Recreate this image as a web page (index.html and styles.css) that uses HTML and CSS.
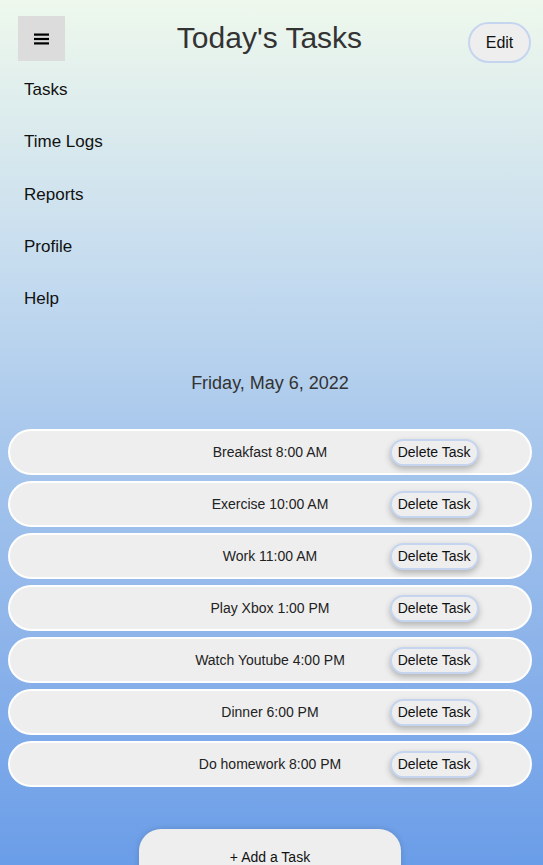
FILE: index.html
```html
<!DOCTYPE html>
<html>
<head>
<meta charset="utf-8">
<link rel="stylesheet" href="styles.css">
</head>
<body>
<div class="app">
  <header class="topbar">
    <button class="menu-btn" aria-label="Menu">
      <svg width="15" height="12" viewBox="0 0 15 12"><rect x="0" y="0.5" width="15" height="2.2" fill="#000"/><rect x="0" y="4.9" width="15" height="2.2" fill="#000"/><rect x="0" y="9.3" width="15" height="2.2" fill="#000"/></svg>
    </button>
    <h1 class="title">Today's Tasks</h1>
    <button class="edit-btn">Edit</button>
  </header>
  <nav class="nav">
    <a class="nav-item">Tasks</a>
    <a class="nav-item">Time Logs</a>
    <a class="nav-item">Reports</a>
    <a class="nav-item">Profile</a>
    <a class="nav-item">Help</a>
  </nav>
  <div class="date">Friday, May 6, 2022</div>
  <ul class="tasks">
    <li class="task"><span class="task-name">Breakfast 8:00 AM</span><button class="del-btn">Delete Task</button></li>
    <li class="task"><span class="task-name">Exercise 10:00 AM</span><button class="del-btn">Delete Task</button></li>
    <li class="task"><span class="task-name">Work 11:00 AM</span><button class="del-btn">Delete Task</button></li>
    <li class="task"><span class="task-name">Play Xbox 1:00 PM</span><button class="del-btn">Delete Task</button></li>
    <li class="task"><span class="task-name">Watch Youtube 4:00 PM</span><button class="del-btn">Delete Task</button></li>
    <li class="task"><span class="task-name">Dinner 6:00 PM</span><button class="del-btn">Delete Task</button></li>
    <li class="task"><span class="task-name">Do homework 8:00 PM</span><button class="del-btn">Delete Task</button></li>
  </ul>
  <div class="add-wrap">
    <button class="add-btn">+ Add a Task</button>
  </div>
</div>
</body>
</html>
```
FILE: styles.css
```css
html, body {
  margin: 0;
  padding: 0;
  height: 100%;
}
body {
  font-family: "Liberation Sans", Arial, sans-serif;
  background: linear-gradient(to bottom, #eef8ec 0%, #c4dbef 32%, #a9c8ec 50%, #8cb3ea 75%, #6a9de8 100%);
  color: #222;
  overflow: hidden;
}
.app {
  width: 524px;
  margin-left: 8px;
  height: 865px;
  display: flex;
  flex-direction: column;
}
.topbar {
  height: 70px;
  display: flex;
  align-items: flex-start;
}
.menu-btn {
  margin-top: 16px;
  margin-left: 10px;
  width: 47px;
  height: 45px;
  border: none;
  background: #dcdcdc;
  display: flex;
  align-items: center;
  justify-content: center;
  padding: 0;
}
.title {
  flex: 1;
  margin: 0;
  margin-top: 21px;
  text-align: center;
  font-size: 30px;
  font-weight: normal;
  color: #333;
  line-height: 34px;
  padding-left: 6px;
}
.edit-btn {
  margin-top: 22px;
  width: 63px;
  height: 41px;
  border-radius: 21px;
  border: 2px solid #c5d5f0;
  background: #eeeeee;
  font-family: "Liberation Sans", Arial, sans-serif;
  font-size: 16px;
  color: #111;
  margin-right: 1px;
}
.nav {
  display: flex;
  flex-direction: column;
  margin-top: 17px;
  padding-left: 16px;
}
.nav-item {
  font-size: 17px;
  color: #111;
  line-height: 20px;
  height: 52.3px;
}
.date {
  margin-top: 32px;
  text-align: center;
  font-size: 18px;
  color: #333;
  line-height: 20px;
}
.tasks {
  list-style: none;
  margin: 36px 0 0 0;
  padding: 0;
  display: flex;
  flex-direction: column;
  gap: 6px;
}
.task {
  box-sizing: border-box;
  height: 46px;
  border: 2px solid #fff;
  border-radius: 23px;
  background: #eeeeee;
  display: grid;
  grid-template-columns: 1fr 1fr 1fr;
  align-items: center;
}
.task-name {
  grid-column: 2;
  text-align: center;
  font-size: 14px;
  color: #222;
  white-space: nowrap;
}
.del-btn {
  grid-column: 3;
  justify-self: start;
  margin-left: 33px;
  height: 27px;
  padding: 0 6px;
  border-radius: 14px;
  border: 2px solid #c5d5f0;
  background: #eeeeee;
  font-family: "Liberation Sans", Arial, sans-serif;
  font-size: 14px;
  color: #111;
  box-shadow: 0 3px 6px rgba(0,0,0,0.25);
  white-space: nowrap;
}
.add-wrap {
  margin-top: 42px;
  display: flex;
  justify-content: center;
}
.add-btn {
  width: 262px;
  height: 60px;
  border: none;
  border-radius: 22px 22px 0 0;
  background: #eeeeee;
  box-shadow: 0 0 6px rgba(0,0,0,0.15);
  font-family: "Liberation Sans", Arial, sans-serif;
  font-size: 14px;
  color: #111;
  display: flex;
  justify-content: center;
  padding-top: 20px;
}
```
